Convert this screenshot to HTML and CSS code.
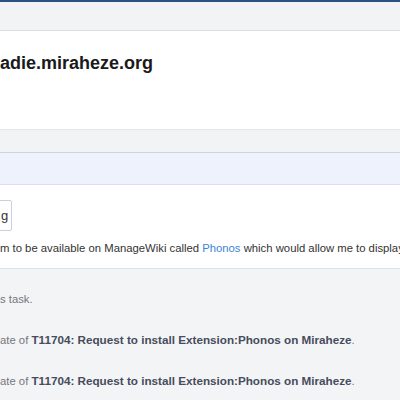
FILE: index.html
```html
<!DOCTYPE html>
<html lang="en">
<head>
    <meta charset="UTF-8">
    <title>T11704</title>
    <link rel="stylesheet" href="styles.css">
</head>
<body>
    <div class="topbar"></div>
    <div class="crumbs"></div>

    <div class="header">
        <h1 class="title">adie.miraheze.org</h1>
    </div>

    <div class="gap"></div>
    <div class="band"></div>

    <div class="content">
        <div class="btn">g</div>
        <p class="desc">m to be available on ManageWiki called <a href="#">Phonos</a> which would allow me to display</p>
    </div>

    <div class="timeline">
        <p class="event">s task.</p>
        <p class="event">ate of <strong>T11704: Request to install Extension:Phonos on Miraheze</strong>.</p>
        <p class="event">ate of <strong>T11704: Request to install Extension:Phonos on Miraheze</strong>.</p>
    </div>
</body>
</html>
```

FILE: styles.css
```css
body {
    margin: 0;
    font-family: "Liberation Sans", Arial, sans-serif;
    font-size: 11.3px;
    color: #333;
    background-color: #f3f4f6;
    overflow: hidden;
}
.topbar {
    height: 2px;
    background-color: #2c5282;
}
.crumbs {
    height: 28px;
    background-color: #f2f3f5;
    border-bottom: 1px solid #dcdee3;
}
.header {
    height: 99px;
    background-color: #fff;
    border-bottom: 1px solid #e4e6ea;
    box-sizing: border-box;
    padding-top: 20px;
}
.title {
    margin: 0;
    font-size: 18px;
    font-weight: bold;
    color: #1a1a1a;
    line-height: 24px;
}
.gap {
    height: 22px;
    background-color: #f2f3f5;
}
.band {
    height: 31px;
    background-color: #edf2fc;
    border-top: 1px solid #c8d4e4;
    border-bottom: 1px solid #d8e0ec;
}
.content {
    background-color: #fff;
    padding: 15px 0 14px 0;
    height: 84px;
    box-sizing: border-box;
    border-bottom: 1px solid #dbe2ea;
}
.btn {
    display: inline-block;
    margin-left: -20px;
    padding: 0 3px 0 20px;
    height: 29px;
    line-height: 29px;
    border: 1px solid #c7d0dc;
    border-radius: 2px;
    font-size: 13px;
    color: #333;
}
.desc {
    margin: 8px 0 0;
    white-space: nowrap;
    line-height: 18px;
}
.desc a {
    color: #3b86d4;
    text-decoration: none;
}
.timeline {
    padding-top: 21px;
}
.event {
    margin: 0 0 23px;
    line-height: 18px;
    color: #74777d;
    white-space: nowrap;
}
.event strong {
    font-size: 11.7px;
    color: #464c5c;
}
```
